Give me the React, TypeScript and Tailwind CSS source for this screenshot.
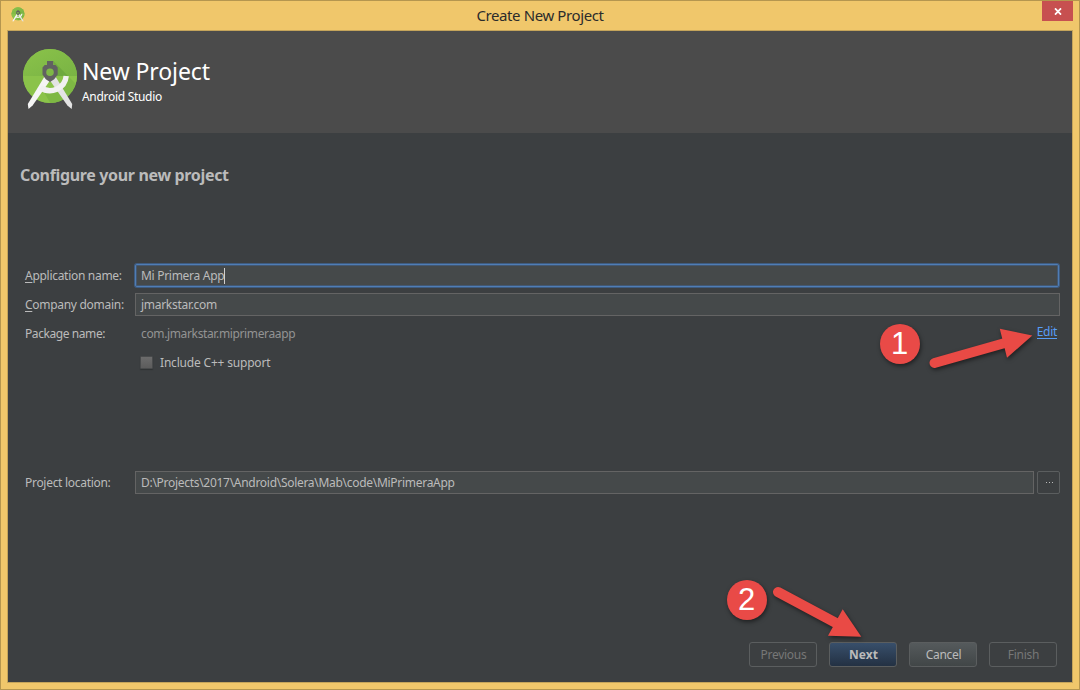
import type { ReactNode } from "react";

function StudioLogo({ className }: { className: string }) {
  return (
    <svg viewBox="22 48 56 62" className={className}>
      <defs>
        <linearGradient id="disc" x1="0" y1="0" x2="1" y2="1">
          <stop offset="0" stopColor="#8bc34a" />
          <stop offset="1" stopColor="#79b344" />
        </linearGradient>
        <clipPath id="discClip">
          <circle cx="50" cy="76" r="27" />
        </clipPath>
      </defs>
      <circle cx="50" cy="76" r="27" fill="#7cb84a" />
      <g clipPath="url(#discClip)">
        <rect x="22" y="48" width="56" height="28" fill="url(#disc)" />
        <rect x="22" y="76" width="56" height="28" fill="#8bc34a" />
        <path d="M53.3 61 L68 76 H57Z" fill="#5d9a37" opacity="0.45" />
        <path d="M69 77 L78 86 V106 H52 L44 92 L60 91Z" fill="#6ca73b" opacity="0.4" />
      </g>
      <path d="M44.2 77 L50 80.5 L32.6 105.5 L28.5 109 L27.8 104Z" fill="#f5f5f5" />
      <path d="M55.8 77 L50 80.5 L67.4 105.5 L71.7 109 L72.2 104Z" fill="#e3e3e3" />
      <path d="M66.2 76 A16.2 16.2 0 0 1 40.5 87.5" fill="none" stroke="#f1f1f1" strokeWidth="5.4" />
      <path
        fillRule="evenodd"
        d="M47 61 H53.2 V65 H55.5 L57.7 67.5 V74.5 L54.2 79.3 L50 82 L45.8 79.3 L42.5 74.5 V67.5 L44.7 65 H47Z M50 68.4 A3.8 3.8 0 1 0 50 76 A3.8 3.8 0 1 0 50 68.4Z"
        fill="#616161"
      />
    </svg>
  );
}

function Button({ children, className }: { children: ReactNode; className: string }) {
  return (
    <button className={`flex h-[25px] w-[68px] items-center justify-center rounded-[3px] border border-[#5b5e5f] pt-px pl-px text-[12px] ${className}`}>
      {children}
    </button>
  );
}

function Field({ children, className }: { children: ReactNode; className: string }) {
  return (
    <div className={`flex h-[23px] items-center bg-[#45494a] pl-[5px] ${className}`}>
      {children}
    </div>
  );
}

function Step({ n, className }: { n: string; className: string }) {
  return (
    <div className={`absolute flex size-10 items-center justify-center rounded-full bg-[#e94a47] pr-px pb-px font-['Liberation_Sans',sans-serif] text-[31px] leading-none tracking-normal text-white shadow-[1px_2px_4px_rgba(0,0,0,0.5)] ${className}`}>
      {n}
    </div>
  );
}

export default function App() {
  return (
    <div className="relative flex h-[690px] w-[1080px] flex-col overflow-hidden border border-[#b5964f] bg-[#f0c76b] px-[6px] pb-[6px] font-['Noto_Sans','Open_Sans',sans-serif] text-[12px] leading-4 tracking-[-0.29px] text-[#bbbbbb]">
      <div className="flex h-[29px] shrink-0 justify-between pl-[4px]">
        <StudioLogo className="mt-[6px] h-[15px] w-[14px]" />
        <h1 className="mt-[4px] ml-[13px] text-[15px] leading-5 tracking-[-0.4px] text-[#2b2b2b]">Create New Project</h1>
        <button className="flex h-5 w-[31px] items-center justify-center bg-[#c75050]">
          <svg viewBox="0 0 8 7" className="ml-px h-[7px] w-2">
            <path d="M1 0.3 L7 6.7 M7 0.3 L1 6.7" stroke="white" strokeWidth="1.7" />
          </svg>
        </button>
      </div>
      <main className="flex flex-1 flex-col border border-[#c4a45b] bg-[#3c3f41]">
        <header className="flex h-[102px] shrink-0 bg-[#4b4b4b] pt-[17px] pl-[14px]">
          <StudioLogo className="h-[62px] w-14" />
          <div className="ml-1 text-white">
            <div className="mt-[8px] text-[23px] leading-[30px] tracking-[-0.12px]">New Project</div>
            <div className="mt-[3px] text-[12px] leading-4 tracking-[-0.3px]">Android Studio</div>
          </div>
        </header>
        <h2 className="mt-[31px] ml-3 text-[16px] leading-[22px] font-bold tracking-[-0.34px]">Configure your new project</h2>
        <div className="mt-[78px] mr-3 ml-[17px] grid grid-cols-[110px_1fr] items-center">
          <label className="h-[29px] pt-[4px]"><u className="underline-offset-2">A</u>pplication name:</label>
          <div className="h-[29px]">
            <Field className="mr-px rounded-[2px] border border-[#4f7db5] shadow-[0_0_0_1px_#3f5c80,inset_0_0_0_1px_#435872]">
              Mi Primera App<span className="h-4 w-px bg-[#d0d0d0]" />
            </Field>
          </div>
          <label className="h-[29px] pt-[4px]"><u className="underline-offset-2">C</u>ompany domain:</label>
          <div className="h-[29px]">
            <Field className="border border-[#646464]">jmarkstar.com</Field>
          </div>
          <label className="h-[29px] pt-[4px] tracking-[-0.42px]">Package name:</label>
          <div className="flex h-[29px] justify-between pt-[4px] pr-[3px] pl-[6px]">
            <span className="tracking-[-0.36px] text-[#939393]">com.jmarkstar.miprimeraapp</span>
            <a className="-mt-[2px] h-[15px] border-b border-[#589df6] text-[#589df6]">Edit</a>
          </div>
          <label className="col-start-2 flex h-[29px] items-start pt-[4px] pl-[5px]">
            <span className="mt-px mr-[7px] size-[13px] rounded-[1px] border border-[#494b4c] bg-linear-to-b from-[#6c6c6c] to-[#5c5c5c] shadow-[0_1px_1px_#2f3233]" />
            <span className="tracking-[-0.19px]">Include C++ support</span>
          </label>
        </div>
        <div className="mt-[91px] mr-3 ml-[17px] flex items-center">
          <label className="w-[110px]">Project location:</label>
          <Field className="flex-1 border border-[#646464]">D:\Projects\2017\Android\Solera\Mab\code\MiPrimeraApp</Field>
          <button className="ml-[3px] flex size-[23px] items-center justify-center gap-[2px] rounded-[2px] border border-[#5b5e5f] pl-px">
            <span className="size-px bg-[#bbbbbb]" />
            <span className="size-px bg-[#bbbbbb]" />
            <span className="size-px bg-[#bbbbbb]" />
          </button>
        </div>
        <footer className="mt-auto mr-[15px] mb-[15px] flex justify-end gap-3">
          <Button className="text-[#777777]">Previous</Button>
          <Button className="bg-linear-to-b from-[#384f6b] to-[#233143] font-bold tracking-normal">Next</Button>
          <Button className="bg-linear-to-b from-[#555a5c] to-[#414647]">Cancel</Button>
          <Button className="text-[#777777]">Finish</Button>
        </footer>
      </main>
      <svg viewBox="0 0 1080 690" className="pointer-events-none absolute -top-px -left-px h-[690px] w-[1080px] drop-shadow-[1px_2px_2px_rgba(0,0,0,0.5)]">
        <g stroke="#e94a45" strokeWidth="10" strokeLinecap="round" fill="#e94a45">
          <path d="M934.5 363 L1004 343.3" />
          <path d="M778 592 L836 623" />
        </g>
        <path d="M999.8 328.8 L1032.3 335.4 L1007 357.8Z M842.7 609.2 L861.3 636.7 L828 635.7Z" fill="#e94a45" />
      </svg>
      <Step n="1" className="top-[323px] left-[879px]" />
      <Step n="2" className="top-[579px] left-[726px]" />
    </div>
  );
}
